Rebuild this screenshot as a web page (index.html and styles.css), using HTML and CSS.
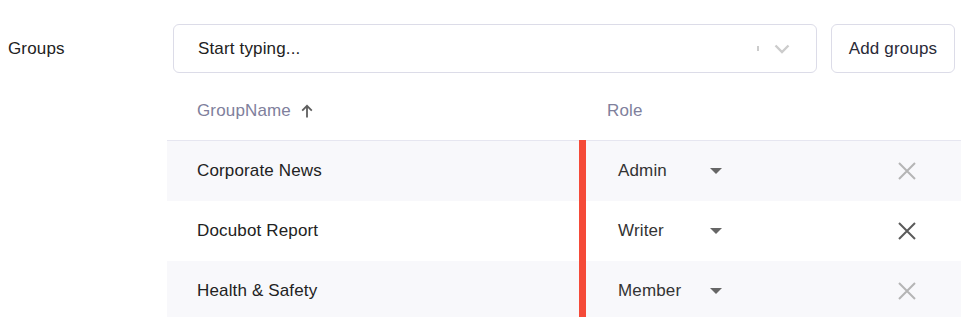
FILE: index.html
```html
<html>
    <head>
        <link rel="stylesheet" href="styles.css">
    </head>
    <body>
        <div class="field">
            <div class="field-label">Groups</div>
            <div class="field-body">
                <div class="picker">
                    <div class="combo">
                        <span class="combo-text">Start typing...</span>
                        <span class="combo-sep"></span>
                        <svg class="combo-chevron" width="16" height="10" viewBox="0 0 16 10"><polyline points="1.5,1.5 8,8 14.5,1.5" fill="none" stroke="#cccccc" stroke-width="2.4"/></svg>
                    </div>
                    <button class="add-btn">Add groups</button>
                </div>

                <div class="groups-table">
                    <div class="row head">
                        <div class="cell name">GroupName
                            <svg class="sort-arrow" width="12" height="14" viewBox="0 0 12 14"><path d="M6 13.5V1.8M1.2 6.6L6 1.8l4.8 4.8" fill="none" stroke="#5e5e5e" stroke-width="1.8"/></svg>
                        </div>
                        <div class="cell role">Role</div>
                        <div class="cell action"></div>
                    </div>
                    <div class="rows">
                        <div class="resize-bar"></div>
                        <div class="row shaded">
                            <div class="cell name">Corporate News</div>
                            <div class="cell role">
                                <div class="select">Admin <svg width="12" height="6" viewBox="0 0 12 6"><polygon points="0,0 12,0 6,6" fill="#666"/></svg></div>
                            </div>
                            <div class="cell action">
                                <svg class="remove" width="18" height="18" viewBox="0 0 18 18"><path d="M1 1L17 17M17 1L1 17" stroke="#b5b5b5" stroke-width="2"/></svg>
                            </div>
                        </div>
                        <div class="row">
                            <div class="cell name">Docubot Report</div>
                            <div class="cell role">
                                <div class="select">Writer <svg width="12" height="6" viewBox="0 0 12 6"><polygon points="0,0 12,0 6,6" fill="#666"/></svg></div>
                            </div>
                            <div class="cell action">
                                <svg class="remove" width="18" height="18" viewBox="0 0 18 18"><path d="M1 1L17 17M17 1L1 17" stroke="#5a5a5a" stroke-width="2"/></svg>
                            </div>
                        </div>
                        <div class="row shaded">
                            <div class="cell name">Health &amp; Safety</div>
                            <div class="cell role">
                                <div class="select">Member <svg width="12" height="6" viewBox="0 0 12 6"><polygon points="0,0 12,0 6,6" fill="#666"/></svg></div>
                            </div>
                            <div class="cell action">
                                <svg class="remove" width="18" height="18" viewBox="0 0 18 18"><path d="M1 1L17 17M17 1L1 17" stroke="#b5b5b5" stroke-width="2"/></svg>
                            </div>
                        </div>
                    </div>
                </div>
            </div>
        </div>
    </body>
</html>
```

FILE: styles.css
```css
body {
    margin: 0;
    width: 961px;
    font-family: "Liberation Sans", Arial, sans-serif;
    font-size: 17px;
    letter-spacing: 0.15px;
    color: #222;
    overflow: hidden;
}

.field {
    display: flex;
    padding-top: 24px;
}

.field-label {
    width: 159px;
    padding-left: 8px;
    line-height: 49px;
    color: #222;
}

.field-body {
    flex: 1;
}

.picker {
    display: flex;
    gap: 14px;
    height: 49px;
    padding: 0 6px;
}

.combo {
    flex: 1;
    display: flex;
    align-items: center;
    box-sizing: border-box;
    border: 1px solid #dcdce8;
    border-radius: 6px;
    padding: 0 26px 0 24px;
    background: #fff;
}

.combo-text {
    flex: 1;
    color: #222;
}

.combo-sep {
    width: 2px;
    height: 5px;
    background: #cccccc;
    margin-right: 15px;
}

.add-btn {
    width: 124px;
    box-sizing: border-box;
    border: 1px solid #dcdce8;
    border-radius: 6px;
    background: #fff;
    font-family: inherit;
    font-size: 17px;
    letter-spacing: 0.15px;
    color: #2a2a38;
    padding: 0;
}

.groups-table {
    margin-top: 7px;
}

.row {
    display: grid;
    grid-template-columns: 412px 1fr 100px;
    height: 60px;
    align-items: center;
}

.row.head {
    border-bottom: 1px solid #e6e6f0;
    color: #80809c;
    padding-top: 2px;
    height: 58px;
}

.row.shaded {
    background: #f8f8fb;
}

.rows {
    position: relative;
}

.resize-bar {
    position: absolute;
    left: 412px;
    top: -1px;
    bottom: 0;
    width: 7px;
    background: #f54a38;
}

.cell.name {
    padding-left: 30px;
    display: flex;
    align-items: center;
    gap: 10px;
}

.cell.role {
    padding-left: 28px;
}

.select {
    width: 115px;
    box-sizing: border-box;
    padding-left: 11px;
    display: flex;
    align-items: center;
    justify-content: space-between;
    color: #333;
}

.cell.action {
    display: flex;
    justify-content: center;
    padding-right: 8px;
}
```
